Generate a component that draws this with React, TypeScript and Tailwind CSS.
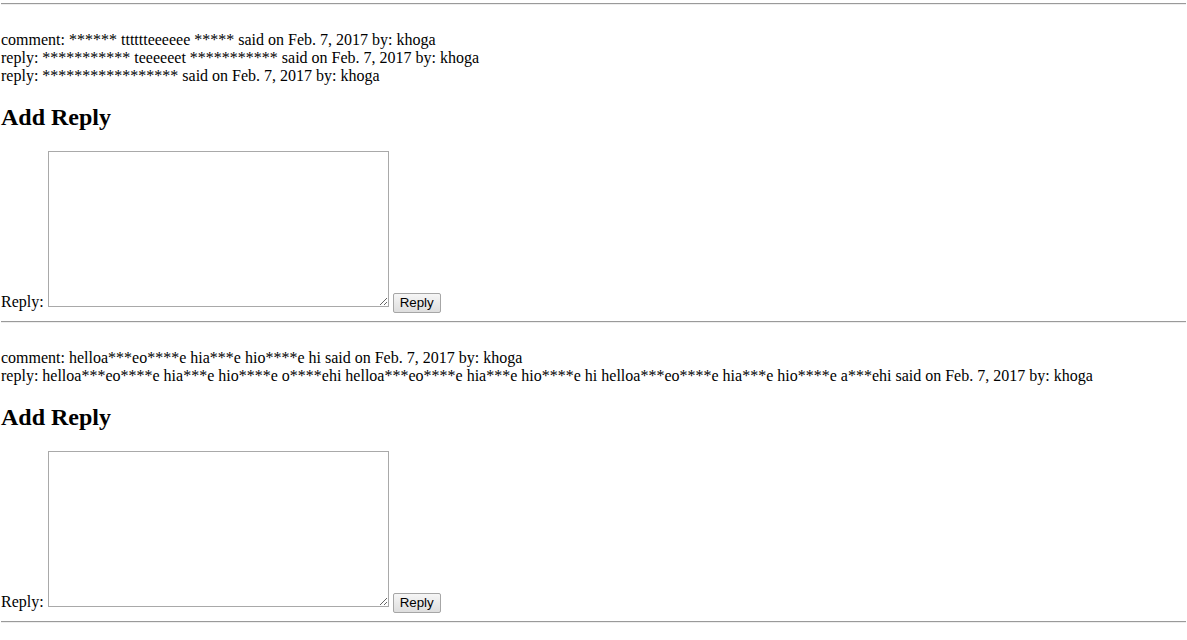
const threads = [
  {
    id: 1,
    lines: [
      "comment: ****** tttttteeeeee ***** said on Feb. 7, 2017 by: khoga",
      "reply: *********** teeeeeet *********** said on Feb. 7, 2017 by: khoga",
      "reply: ***************** said on Feb. 7, 2017 by: khoga",
    ],
  },
  {
    id: 2,
    lines: [
      "comment: helloa***eo****e hia***e hio****e hi said on Feb. 7, 2017 by: khoga",
      "reply: helloa***eo****e hia***e hio****e o****ehi helloa***eo****e hia***e hio****e hi helloa***eo****e hia***e hio****e a***ehi said on Feb. 7, 2017 by: khoga",
    ],
  },
];

function Rule() {
  return <hr className="h-0 border-t border-b border-t-[#9a9a9a] border-b-[#eeeeee]" />;
}

function Thread({ lines }: { lines: string[] }) {
  return (
    <div>
      <div className="mt-[25.6px]">
        {lines.map((line, i) => (
          <div key={i} className="whitespace-nowrap">
            {line}
          </div>
        ))}
      </div>
      <h2 className="mt-[19.5px] mb-[19.92px] text-[24px] font-bold leading-[normal]">Add Reply</h2>
      <form className="mb-[8px]" onSubmit={(e) => e.preventDefault()}>
        Reply:{" "}
        <textarea className="inline-block h-[156px] w-[341px] border border-[#a9a9a9] bg-white p-[2px] align-baseline font-['Liberation_Mono',monospace] text-[13px]" />{" "}
        <button
          type="submit"
          className="inline-block rounded-[2px] border border-[#a6a6a6] bg-gradient-to-b from-[#f6f6f6] to-[#dedede] px-[6px] py-[1px] font-['Liberation_Sans',Arial,sans-serif] text-[13.33px] leading-[16px] text-black"
        >
          Reply
        </button>
      </form>
      <Rule />
    </div>
  );
}

export default function App() {
  return (
    <div className="min-h-[640px] bg-white px-[1px] pt-[3px] font-['Liberation_Serif','Times_New_Roman',serif] text-[16px] leading-[normal] text-black">
      <Rule />
      {threads.map((t) => (
        <Thread key={t.id} lines={t.lines} />
      ))}
    </div>
  );
}
